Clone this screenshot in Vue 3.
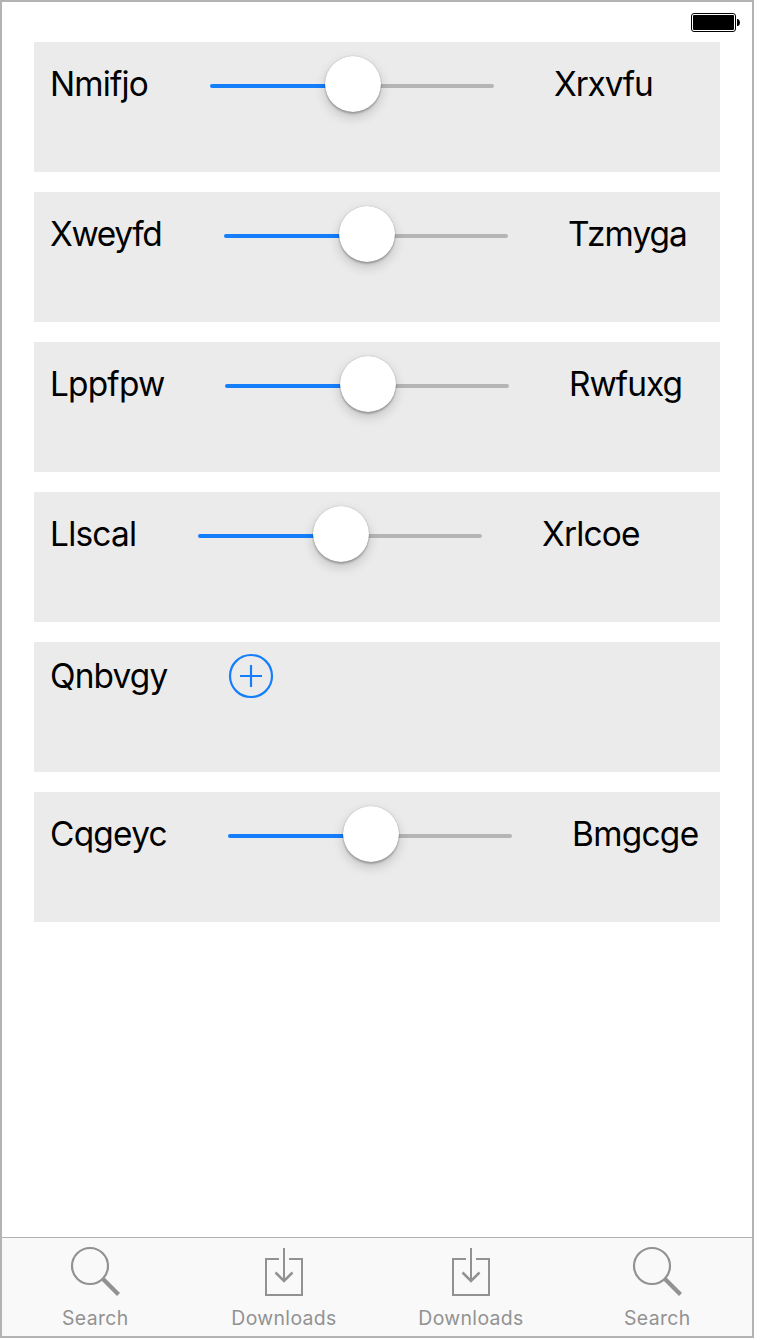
<script setup>
const rows = [
  { label: 'Nmifjo', width: 100, spacing: -0.85, end: 'Xrxvfu', endSpacing: -1.15 },
  { label: 'Xweyfd', width: 114, spacing: -1.35, end: 'Tzmyga', endSpacing: -0.95 },
  { label: 'Lppfpw', width: 115, spacing: -0.8, end: 'Rwfuxg', endSpacing: -1 },
  { label: 'Llscal', width: 88, spacing: -0.75, end: 'Xrlcoe', endSpacing: -0.8 },
  { label: 'Qnbvgy', width: 118, spacing: -0.85, button: true },
  { label: 'Cqgeyc', width: 118, spacing: -0.75, end: 'Bmgcge', endSpacing: -0.7 },
]
const tabs = [
  { icon: 'search', label: 'Search' },
  { icon: 'download', label: 'Downloads' },
  { icon: 'download', label: 'Downloads' },
  { icon: 'search', label: 'Search' },
]
</script>

<template>
  <div class="screen">
    <header class="status">
      <svg class="battery" width="50" height="20" viewBox="0 0 50 20">
        <rect x="0.5" y="0.5" width="44" height="18" rx="2.5" fill="#fff" stroke="#000" />
        <rect x="2" y="2" width="41" height="15" rx="1" />
        <path d="M46 6h1q2 1 2 3.500t-2 3.500h-1z" />
      </svg>
    </header>
    <main class="list">
      <section v-for="row in rows" :key="row.label" class="card" :class="{ compact: row.button }">
        <span class="label" :style="{ width: row.width + 'px', letterSpacing: row.spacing + 'px' }">{{ row.label }}</span>
        <svg v-if="row.button" class="add" width="46" height="46" viewBox="0 0 46 46">
          <circle cx="23" cy="23" r="21" />
          <path d="M12 23h22M23 12v22" />
        </svg>
        <template v-else>
          <div class="slider">
            <div class="track filled"></div>
            <div class="thumb"></div>
            <div class="track"></div>
          </div>
          <span class="label" :style="{ letterSpacing: row.endSpacing + 'px' }">{{ row.end }}</span>
        </template>
      </section>
    </main>
    <nav class="tabs">
      <div v-for="(tab, i) in tabs" :key="i" class="tab" :class="tab.icon">
        <svg v-if="tab.icon === 'search'" width="52" height="52" viewBox="0 0 52 52">
          <circle cx="20" cy="20" r="18" stroke-width="2.200" />
          <path d="M32.500 32.500L48.500 48.500" stroke-width="4.200" />
        </svg>
        <svg v-else width="52" height="52" viewBox="0 0 52 52">
          <path d="M21 13H8v36h36V13H31M26 2v33" stroke-width="2" />
          <path d="M17.500 26.500L26 35L34.500 26.500" stroke-width="2.500" />
        </svg>
        <span>{{ tab.label }}</span>
      </div>
    </nav>
  </div>
</template>

<style>
body { margin: 0; background: #fff; }
</style>

<style scoped>
.screen {
  box-sizing: border-box;
  width: 754px;
  height: 1338px;
  border: 2px solid #b3b3b3;
  background: #fff;
  display: flex;
  flex-direction: column;
  font-family: Inter, "Liberation Sans", sans-serif;
  color: #000;
}
.status {
  height: 40px;
  box-sizing: border-box;
  padding: 11px 11px 0 0;
  display: flex;
  justify-content: flex-end;
}
.list {
  flex: 1;
  padding: 0 32px;
  display: flex;
  flex-direction: column;
  gap: 20px;
}
.card {
  box-sizing: border-box;
  height: 130px;
  padding: 13px 0 0 16px;
  background: #ebebeb;
  display: flex;
  align-items: flex-start;
  gap: 60px;
}
.label {
  flex: none;
  font-size: 33.4px;
  line-height: 58px;
  white-space: nowrap;
}
.slider {
  flex: none;
  width: 284px;
  height: 58px;
  display: flex;
  align-items: flex-start;
}
.track {
  flex: 1;
  height: 4px;
  margin-top: 29px;
  margin-left: -2px;
  background: #b5b5b5;
  border-radius: 0 2px 2px 0;
}
.track.filled {
  flex: none;
  width: 117px;
  margin-left: 0;
  margin-right: -2px;
  background: #147efb;
  border-radius: 2px 0 0 2px;
}
.thumb {
  position: relative;
  flex: none;
  width: 56px;
  height: 56px;
  margin-top: 1px;
  border-radius: 50%;
  background: #fff;
  box-shadow: 0 0 1px rgba(0, 0, 0, 0.35), 0 2px 2px rgba(0, 0, 0, 0.22), 0 5px 12px rgba(0, 0, 0, 0.18);
}
.compact { padding-top: 11px; }
.compact .label { line-height: 47px; }
.add { flex: none; fill: none; stroke: #147efb; stroke-width: 2.2; }
.tabs {
  box-sizing: border-box;
  height: 99px;
  border-top: 1px solid #b2b2b2;
  background: #f9f9f9;
  display: grid;
  grid-template-columns: 188fr 188fr 186fr 188fr;
  color: #929292;
}
.tab {
  display: flex;
  flex-direction: column;
  align-items: center;
  padding-top: 8px;
  font-size: 19.4px;
  line-height: 24px;
  letter-spacing: 0.36px;
}
.tab svg { fill: none; stroke: #929292; }
.tab span { margin-top: 8px; }
.tab.search span { margin-right: 1.5px; }
</style>
